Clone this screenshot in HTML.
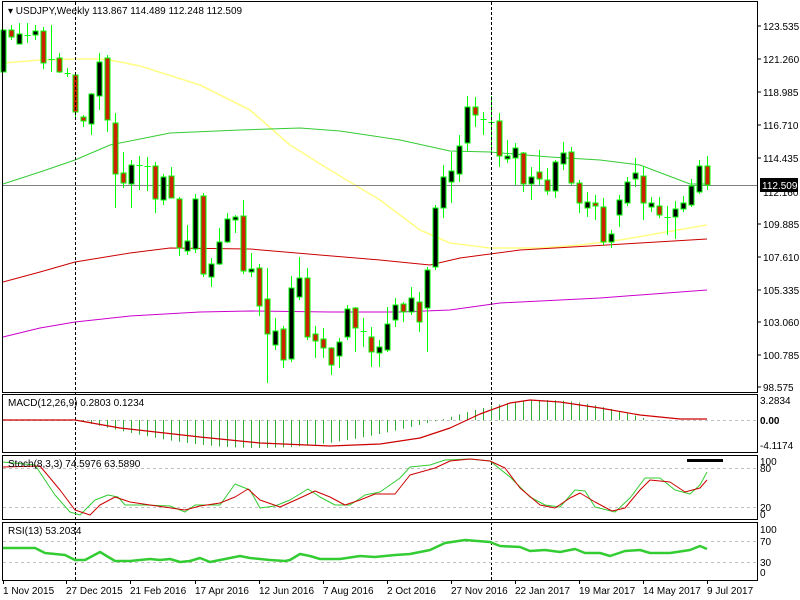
<!DOCTYPE html>
<html><head><meta charset="utf-8"><style>
html,body{margin:0;padding:0;background:#fff;width:800px;height:600px;overflow:hidden}
svg text{font-family:"Liberation Sans",sans-serif;font-size:10px;fill:#000}
</style></head><body>
<svg id="s" width="800" height="600" xmlns="http://www.w3.org/2000/svg">
<rect width="800" height="600" fill="#fff"/>
</svg>
<script>
var s=document.getElementById('s'),NS='http://www.w3.org/2000/svg';
function el(t,a,txt){var e=document.createElementNS(NS,t);for(var k in a)e.setAttribute(k,a[k]);if(txt!=null)e.textContent=txt;s.appendChild(e);return e;}
function pl(pts,c,w,extra){var a={points:pts.map(function(p){return p.join(',')}).join(' '),fill:'none',stroke:c,'stroke-width':w,'stroke-linejoin':'round'};for(var k in extra)a[k]=extra[k];el('polyline',a);}
// MAs
pl([[3,63],[40,60],[75,59],[100,59],[110,60],[140,66],[200,85],[250,110],[290,145],[330,170],[380,200],[420,230],[450,243],[490,248],[540,248],[580,245],[620,240],[660,233],[707,225]],'#ffff88',1.6);
pl([[3,184],[40,172],[75,160],[110,145],[170,133],[240,130],[300,128],[340,131],[400,140],[450,151],[490,152],[550,157],[600,160],[640,165],[690,184],[707,184]],'#33cc33',1);
pl([[3,282],[40,272],[75,262],[130,253],[170,248],[250,249],[320,255],[380,260],[430,265],[460,258],[520,250],[590,246],[640,243],[707,239]],'#cc0000',1);
pl([[3,337],[40,328],[75,322],[130,316],[200,312],[250,311],[330,312],[400,312],[450,310],[500,303],[600,298],[707,290]],'#cc00cc',1);
el('line',{x1:2,y1:185.5,x2:757,y2:185.5,stroke:'#808080','stroke-width':1});
// candles: [top,bot,high,low,bull]
var C=[[30,72,30,72,1],[30,37,25,40,0],[34,44,23,44,1],[35,35,23,43,2],[31,35,25,40,1],[31,63,27,69,0],[59,59,25,72,2],[58,72,53,73,0],[73,73,68,77,2],[75,112,73,117,0],[117,121,115,127,0],[94,124,93,135,1],[62,96,53,110,1],[58,120,55,132,0],[123,174,113,208,0],[173,183,152,188,0],[165,184,160,208,1],[165,165,156,190,2],[166,166,157,191,2],[166,199,162,213,0],[177,200,174,205,1],[176,198,167,198,0],[199,248,197,256,0],[241,251,225,255,1],[199,249,194,253,1],[196,274,193,277,0],[264,277,258,287,1],[242,264,228,265,1],[219,242,213,243,1],[217,220,215,233,1],[216,271,200,274,0],[269,272,253,277,1],[268,306,264,316,0],[299,334,268,383,0],[331,345,318,350,1],[329,360,326,368,0],[288,359,276,362,1],[278,297,257,300,1],[278,337,268,340,0],[334,341,326,358,0],[339,348,328,358,0],[348,365,347,375,0],[342,356,338,368,1],[309,337,305,340,1],[308,328,307,352,0],[331,333,318,347,2],[337,352,327,367,0],[347,353,340,367,1],[324,350,307,352,1],[305,320,298,327,1],[304,312,302,322,0],[298,312,287,315,1],[302,322,292,332,0],[270,308,267,352,1],[208,267,205,270,1],[177,208,165,218,1],[171,182,152,203,1],[146,174,135,182,1],[107,143,96,152,1],[107,115,97,127,0],[119,119,112,135,2],[122,122,96,153,2],[121,156,113,167,0],[156,159,140,163,1],[148,158,143,185,1],[153,184,152,192,0],[177,184,167,200,1],[172,179,150,185,0],[180,191,168,195,0],[162,191,160,198,1],[153,164,142,170,1],[152,183,147,185,0],[183,203,180,213,0],[202,208,192,217,1],[203,206,195,220,0],[207,242,198,245,0],[234,242,230,248,1],[200,215,195,227,1],[182,203,177,206,1],[173,179,158,187,1],[176,203,166,220,0],[203,207,197,212,1],[206,215,197,218,0],[217,217,206,235,2],[209,217,201,239,1],[203,209,196,212,1],[186,205,179,207,1],[166,192,160,194,1],[166,185,156,190,0]];
C.forEach(function(c,i){var x=3+8*i;
 el('line',{x1:x+.5,y1:c[2],x2:x+.5,y2:c[3],stroke:'#00ff00','stroke-width':1});
 if(c[4]==2){el('line',{x1:x-2.5,y1:c[0]+.5,x2:x+3.5,y2:c[0]+.5,stroke:'#00ff00','stroke-width':1});}
 else el('rect',{x:x-2,y:c[0],width:5,height:Math.max(c[1]-c[0],2),fill:c[4]?'#000':'#cc2200',stroke:'#00ff00','stroke-width':1});
});
// frames
[[2,1,755,391],[2,394,755,58],[2,455,755,64],[2,522,755,58]].forEach(function(r){el('rect',{x:r[0]+.5,y:r[1]+.5,width:r[2],height:r[3],fill:'none',stroke:'#000','stroke-width':1});});
// vertical dashed
[75,491].forEach(function(x){el('line',{x1:x+.5,y1:2,x2:x+.5,y2:580,stroke:'#000','stroke-width':1,'stroke-dasharray':'3,2'});});
// price label
el('text',{x:8,y:14},'\u25BE USDJPY,Weekly  113.867 114.489 112.248 112.509');
var P=[['123.535',26],['121.260',59],['118.985',92],['116.710',125],['114.435',158],['109.885',224],['107.610',257],['105.335',290],['103.060',322],['100.785',355],['98.575',387]];
P.forEach(function(p){el('line',{x1:757,y1:p[1],x2:761,y2:p[1],stroke:'#000'});el('text',{x:763,y:p[1]+4},p[0]);});
el('text',{x:763,y:196},'112.160');
el('rect',{x:760,y:178,width:38,height:14,fill:'#000'});
el('text',{x:762,y:189,style:'fill:#fff'},'112.509');
// MACD
el('line',{x1:3,y1:420.5,x2:756,y2:420.5,stroke:'#c0c0c0','stroke-dasharray':'3,3'});
for(var i=0;i<=88;i++){var x=3+8*i,v;
 if(x<440){v=(x<75?0:Math.sin(Math.min(1,(x-75)/365)*Math.PI)*28*(x<330?1:1));}
 else v=-Math.max(0,Math.sin((x-440)/210*Math.PI))*20;
 if(x>=440&&x<=650){}
 if(Math.abs(v)>0.5)el('line',{x1:x+.5,y1:420,x2:x+.5,y2:420+v,stroke:'#33aa33'});}
pl([[3,420],[75,420],[120,428],[200,437],[260,443],[330,446],[380,444],[420,438],[450,428],[480,414],[510,403],[530,400],[560,402],[600,408],[640,415],[680,419],[707,419]],'#cc0000',1.2);
el('text',{x:8,y:406},'MACD(12,26,9) 0.2803 0.1234');
el('text',{x:760,y:404},'3.2834');el('text',{x:760,y:424,style:'font-weight:bold'},'0.00');el('text',{x:760,y:449},'-4.1174');
// Stoch
[468.5,507.5].forEach(function(y){el('line',{x1:3,y1:y,x2:756,y2:y,stroke:'#c0c0c0','stroke-dasharray':'3,3'});});
pl([[3,462],[35,465],[55,495],[70,512],[80,515],[95,500],[108,495],[118,497],[125,505],[145,505],[170,506],[185,512],[195,505],[220,505],[235,484],[250,490],[260,508],[275,506],[290,500],[308,489],[320,497],[335,505],[350,505],[365,495],[380,492],[400,478],[410,467],[430,465],[445,460],[470,459],[490,461],[510,477],[530,497],[545,505],[560,507],[575,490],[585,491],[595,507],[615,512],[630,498],[645,478],[660,478],[675,490],[690,494],[700,485],[707,472]],'#33cc33',1);
pl([[3,467],[40,466],[60,490],[75,510],[90,515],[100,505],[115,497],[130,502],[150,505],[185,510],[200,506],[220,503],[235,497],[248,489],[260,500],[280,507],[300,498],[315,491],[330,497],[345,505],[360,500],[375,494],[395,494],[410,475],[435,468],[450,461],[470,459],[490,461],[505,468],[520,488],[540,505],[555,508],[570,498],[580,493],[595,502],[612,511],[625,508],[640,490],[650,480],[670,482],[685,492],[700,488],[707,480]],'#cc0000',1);
el('rect',{x:687,y:459,width:36,height:3,fill:'#000'});
el('text',{x:8,y:467},'Stoch(8,3,3) 74.5976 63.5890');
el('text',{x:760,y:465},'100');el('text',{x:760,y:472},'80');el('text',{x:760,y:511},'20');el('text',{x:760,y:518},'0');
// RSI
[541.5,562.5].forEach(function(y){el('line',{x1:3,y1:y,x2:756,y2:y,stroke:'#c0c0c0','stroke-dasharray':'3,3'});});
pl([[3,548],[35,548],[45,553],[65,555],[75,560],[85,560],[100,552],[115,561],[130,561],[150,559],[160,560],[170,559],[180,562],[190,561],[200,558],[210,562],[230,558],[240,556],[250,558],[270,560],[285,561],[290,560],[300,554],[310,556],[320,559],[340,559],[360,556],[375,557],[395,555],[410,554],[430,550],[445,543],[465,540],[490,542],[500,546],[520,547],[530,551],[545,550],[560,552],[575,549],[585,553],[600,553],[610,556],[625,551],[640,550],[650,553],[670,553],[690,550],[700,546],[707,549]],'#33cc33',2.5);
el('text',{x:8,y:534},'RSI(13) 53.2034');
el('text',{x:760,y:533},'100');el('text',{x:760,y:545},'70');el('text',{x:760,y:566},'30');el('text',{x:760,y:576},'0');
// time axis
[['1 Nov 2015',3],['27 Dec 2015',66],['21 Feb 2016',130],['17 Apr 2016',195],['12 Jun 2016',259],['7 Aug 2016',323],['2 Oct 2016',387],['27 Nov 2016',451],['22 Jan 2017',515],['19 Mar 2017',579],['14 May 2017',643],['9 Jul 2017',707]].forEach(function(t){el('line',{x1:t[1]+.5,y1:580,x2:t[1]+.5,y2:584,stroke:'#000'});el('text',{x:t[1],y:594},t[0]);});
</script>
</body></html>
